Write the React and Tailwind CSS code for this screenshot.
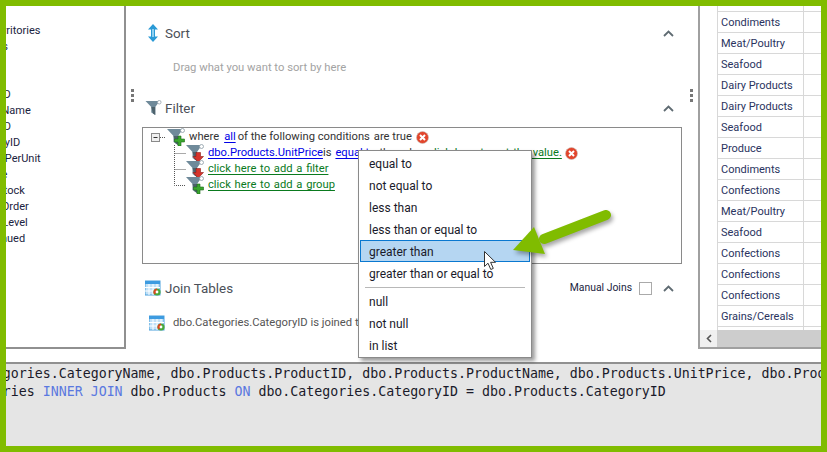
import React from 'react'

const ui = "font-['Roboto',Arial,sans-serif]"

const leftRows = [
  ['EmployeeTerritories', '-ml-[63px]'],
  ['Shippers', '-ml-[41px]'],
  ['', ''],
  ['', ''],
  ['ProductID', '-ml-[44px]'],
  ['ProductName', '-ml-[43px]'],
  ['SupplierID', '-ml-[45px]'],
  ['CategoryID', '-ml-[40px]'],
  ['QuantityPerUnit', '-ml-[42px]'],
  ['UnitPrice', '-ml-[43px]'],
  ['UnitsInStock', '-ml-[43px]'],
  ['UnitsOnOrder', '-ml-[43px]'],
  ['ReorderLevel', '-ml-[42px]'],
  ['Discontinued', '-ml-[45px]'],
]

const categories = [
  'Condiments', 'Meat/Poultry', 'Seafood', 'Dairy Products', 'Dairy Products', 'Seafood', 'Produce',
  'Condiments', 'Confections', 'Meat/Poultry', 'Seafood', 'Confections', 'Confections', 'Confections', 'Grains/Cereals', '',
]

const menuTop = ['equal to', 'not equal to', 'less than', 'less than or equal to', 'greater than', 'greater than or equal to']
const menuBottom = ['null', 'not null', 'in list']

function Chevron() {
  return (
    <svg width="11" height="7" viewBox="0 0 11 7" className="shrink-0">
      <path d="M1 6 L5.5 1.5 L10 6" fill="none" stroke="#5f6b72" strokeWidth="1.8" />
    </svg>
  )
}

function Dots() {
  return (
    <div className="flex flex-col gap-[2px] w-[3px]">
      <div className="w-[3px] h-[3px] bg-[#777]"></div>
      <div className="w-[3px] h-[3px] bg-[#777]"></div>
      <div className="w-[3px] h-[3px] bg-[#777]"></div>
    </div>
  )
}

function SortIcon() {
  return (
    <svg width="12" height="18" viewBox="0 0 12 18">
      <path d="M6 0 L11 5.5 H8 V12.5 H11 L6 18 L1 12.5 H4 V5.5 H1 Z" fill="#2a9ad6" />
      <path d="M5 5 H7 V13 H5 Z" fill="#8fd0f0" />
    </svg>
  )
}

function Funnel({ badge, large }) {
  return (
    <svg width={large ? 17 : 18} height={large ? 16 : 18} viewBox="0 0 18 18" className="shrink-0">
      <path d="M0 1 H16 L11 8 V17 L6.5 14 V8 Z" fill="#6f8a9a" />
      <path d="M6.5 8 H11 V17 L8.5 15.3 Z" fill="#4d626c" />
      <circle cx="15.5" cy="2.5" r="2" fill="#fff" stroke="#8a9aa4" strokeWidth="0.8" />
      {badge === 'plus' && (
        <path d="M11 8 H14 V11 H17.5 V14 H14 V18 H11 V14 H7.5 V11 H11 Z" fill="#3aa62e" stroke="#1d6b1a" strokeWidth="0.6" />
      )}
      {badge === 'down' && (
        <path d="M10 8.5 H14.5 V12.5 H17.5 L12.2 18 L7 12.5 H10 Z" fill="#d6342c" stroke="#8f1d18" strokeWidth="0.6" />
      )}
    </svg>
  )
}

function RemoveIcon() {
  return (
    <svg width="13" height="13" viewBox="0 0 13 13" className="shrink-0">
      <circle cx="6.5" cy="6.5" r="6" fill="#e2452c" stroke="#c9c0b8" strokeWidth="0.6" />
      <path d="M4 4 L9 9 M9 4 L4 9" stroke="#fff" strokeWidth="2" />
    </svg>
  )
}

function TableIcon() {
  return (
    <svg width="16" height="16" viewBox="0 0 16 16" className="shrink-0">
      <rect x="0" y="1" width="15" height="14" fill="#bfe0f7" stroke="#4aa0dc" />
      <rect x="0" y="1" width="15" height="3" fill="#3d9be0" />
      <path d="M4 4 V15 M8 4 V15 M12 4 V15 M0 7.5 H15 M0 11 H15" stroke="#fff" strokeWidth="1" />
      <circle cx="12" cy="12" r="3.6" fill="#4aa83a" />
      <path d="M12 8.4 A3.6 3.6 0 0 0 9.5 14.6 L12 12 Z" fill="#d9481f" />
      <circle cx="12" cy="12" r="1.4" fill="#fff" />
    </svg>
  )
}

function SectionHeader({ icon, title, right }) {
  return (
    <div className="flex items-center h-6">
      <div className="w-[23px] flex justify-center shrink-0 pr-[1px]">{icon}</div>
      <span className="text-[13.4px] text-[#4b5058] pt-[2px]">{title}</span>
      <div className="ml-auto flex items-center pr-[8px]">
        {right}
        <Chevron />
      </div>
    </div>
  )
}

function FilterLink({ children, green }) {
  return (
    <span className={`underline underline-offset-2 ${green ? 'text-[#0a7a1e] decoration-[#0a7a1e] [word-spacing:1px]' : 'text-[#0000e6]'}`}>{children}</span>
  )
}

export default function App() {
  return (
    <div className={`${ui} relative w-[827px] h-[452px] border-[6px] border-[#80bc00] bg-white flex flex-col overflow-hidden text-[11px] leading-4`}>
      <div className="flex h-[343px] shrink-0">
        {/* tree on the left, cut off by the crop */}
        <div className="w-[120px] shrink-0 border-r-2 border-b-2 border-[#909090] overflow-hidden pt-[17px] text-[#1a2340]">
          {leftRows.map(([name, offset], i) => (
            <div key={i} className={`h-4 whitespace-nowrap ${offset}`}>{name}</div>
          ))}
        </div>

        <div className="w-4 shrink-0 pt-[83px] pl-[5px]"><Dots /></div>

        <div className="w-[540px] shrink-0 flex flex-col">
          <div className="mt-[15px]"><SectionHeader icon={<SortIcon />} title="Sort" /></div>
          <div className="mt-[15px] pl-[31px] text-[11.25px] text-[#a3a3a3] h-4">Drag what you want to sort by here</div>
          <div className="mt-[20px]"><SectionHeader icon={<Funnel large />} title="Filter" /></div>
          <div className="relative mt-[7px] h-[137px] border border-[#8a8a8a] pt-[1px] text-[11.2px] text-[#333]">
            <svg width="40" height="60" className="absolute left-[7px] top-[1px]">
              <rect x="1.5" y="4.5" width="8" height="8" fill="#f0f0f0" stroke="#8a8a8a" />
              <path d="M3.5 8.5 H7.5" stroke="#333" />
              <path d="M10 8.5 H16 M24.5 16 V56.5 H36 M24.5 24.5 H36 M24.5 40.5 H36" fill="none" stroke="#555" strokeDasharray="1 1" />
            </svg>
            <div className="flex items-center h-4 pl-[24px] whitespace-nowrap">
              <Funnel badge="plus" />
              <span className="ml-[4px]">where</span>
              <span className="ml-[5px]"><FilterLink>all</FilterLink></span>
              <span className="ml-[2px]">of the following conditions</span>
              <span className="ml-[4px]">are true</span>
              <span className="ml-[4px]"><RemoveIcon /></span>
            </div>
            <div className="flex items-center h-4 pl-[43px] whitespace-nowrap">
              <Funnel badge="down" />
              <span className="ml-[4px]"><FilterLink>dbo.Products.UnitPrice</FilterLink></span>
              <span>is</span>
              <span className="ml-[4px]"><FilterLink>equal to</FilterLink></span>
              <span className="ml-[4px]">the value</span>
              <span className="ml-[4px]"><FilterLink green>click here to set the value.</FilterLink></span>
              <span className="ml-[3px]"><RemoveIcon /></span>
            </div>
            <div className="flex items-center h-4 pl-[43px] whitespace-nowrap">
              <Funnel badge="down" />
              <span className="ml-[4px]"><FilterLink green>click here to add a filter</FilterLink></span>
            </div>
            <div className="flex items-center h-4 pl-[43px] whitespace-nowrap">
              <Funnel badge="plus" />
              <span className="ml-[4px]"><FilterLink green>click here to add a group</FilterLink></span>
            </div>
          </div>
          <div className="mt-[12px]">
            <SectionHeader
              icon={<TableIcon />}
              title="Join Tables"
              right={
                <>
                  <span className="text-[10.4px] text-[#1a2340] mr-[7px]">Manual Joins</span>
                  <div className="w-[13px] h-[13px] border border-[#aaa] mr-[11px]"></div>
                </>
              }
            />
          </div>
          <div className="flex items-center mt-[15px] pl-[7px] text-[11.25px] text-[#555]">
            <TableIcon />
            <span className="ml-[8px]">dbo.Categories.CategoryID is joined to dbo.Products.CategoryID</span>
          </div>
        </div>

        <div className="w-4 shrink-0 pt-[83px] pl-[8px]"><Dots /></div>

        {/* results grid */}
        <div className="flex-1 flex flex-col border-l-2 border-b-2 border-[#a0a0a0] overflow-hidden text-[#2a3360]">
          <div className="flex-1 overflow-hidden">
            <div className="h-[5px] ml-[17px] border-l border-b border-[#d8d8d8] box-content flex">
              <div className="w-[86px] border-r border-[#d8d8d8]"></div>
            </div>
            {categories.map((c, i) => (
              <div key={i} className="flex h-[21px] ml-[17px] border-l border-b border-[#d8d8d8]">
                <div className="w-[86px] pl-[3px] border-r border-[#d8d8d8] leading-[22px] whitespace-nowrap">{c}</div>
              </div>
            ))}
          </div>
          <div className="flex h-[17px] shrink-0 bg-[#cdcdcd]">
            <div className="w-[17px] bg-[#f0f0f0] flex items-center justify-center">
              <svg width="6" height="9" viewBox="0 0 6 9">
                <path d="M5 1 L1.5 4.5 L5 8" fill="none" stroke="#555" strokeWidth="1.6" />
              </svg>
            </div>
          </div>
        </div>
      </div>

      <div className="h-[13px] shrink-0"></div>

      {/* sql text */}
      <div className="flex-1 border-t-2 border-[#909090] bg-[#e5e5e5] overflow-hidden pt-[1px] font-['DejaVu_Sans_Mono',monospace] text-[13.28px] leading-[18px] text-[#1a1a2a]">
        <div className="whitespace-pre -ml-[123px]">SELECT dbo.Categories.CategoryName, dbo.Products.ProductID, dbo.Products.ProductName, dbo.Products.UnitPrice, dbo.Products.CategoryID</div>
        <div className="whitespace-pre -ml-[123px]">FROM dbo.Categories <span className="text-[#5a78e0]">INNER JOIN</span> dbo.Products <span className="text-[#5a78e0]">ON</span> dbo.Categories.CategoryID = dbo.Products.CategoryID</div>
      </div>

      {/* operator menu */}
      <div className="absolute left-[352px] top-[144px] w-[174px] h-[208px] bg-white border border-[#8a8a8a] p-[1px] shadow-[3px_3px_4px_rgba(0,0,0,0.4)] text-[12px] text-[#1a1a2a]">
        {menuTop.map(item => (
          <div
            key={item}
            className={`h-[22px] pl-[8px] leading-[22px] border whitespace-nowrap ${item === 'greater than' ? 'bg-[#b5d6f2] border-[#0a78d0]' : 'border-transparent'}`}
          >
            {item}
          </div>
        ))}
        <div className="h-[6px] flex items-center px-[5px]">
          <div className="h-px w-full bg-[#b8b8b8]"></div>
        </div>
        {menuBottom.map(item => (
          <div key={item} className="h-[22px] pl-[9px] leading-[24px]">{item}</div>
        ))}
      </div>

      {/* callout arrow and pointer */}
      <svg width="110" height="60" viewBox="0 0 110 60" className="absolute left-[500px] top-[201px] drop-shadow-[2px_3px_2px_rgba(0,0,0,0.35)]">
        <path d="M100 8 L38 32" stroke="#80bc00" strokeWidth="10" strokeLinecap="round" />
        <path d="M7 43 L28 20 L39 47 Z" fill="#80bc00" />
      </svg>
      <svg width="14" height="20" viewBox="0 0 14 20" className="absolute left-[478px] top-[245px]">
        <path d="M0.5 0.5 V15.5 L4 12.2 L6.8 18.5 L9.3 17.4 L6.6 11.3 H11.5 Z" fill="#fff" stroke="#333" strokeWidth="1" />
      </svg>
    </div>
  )
}
